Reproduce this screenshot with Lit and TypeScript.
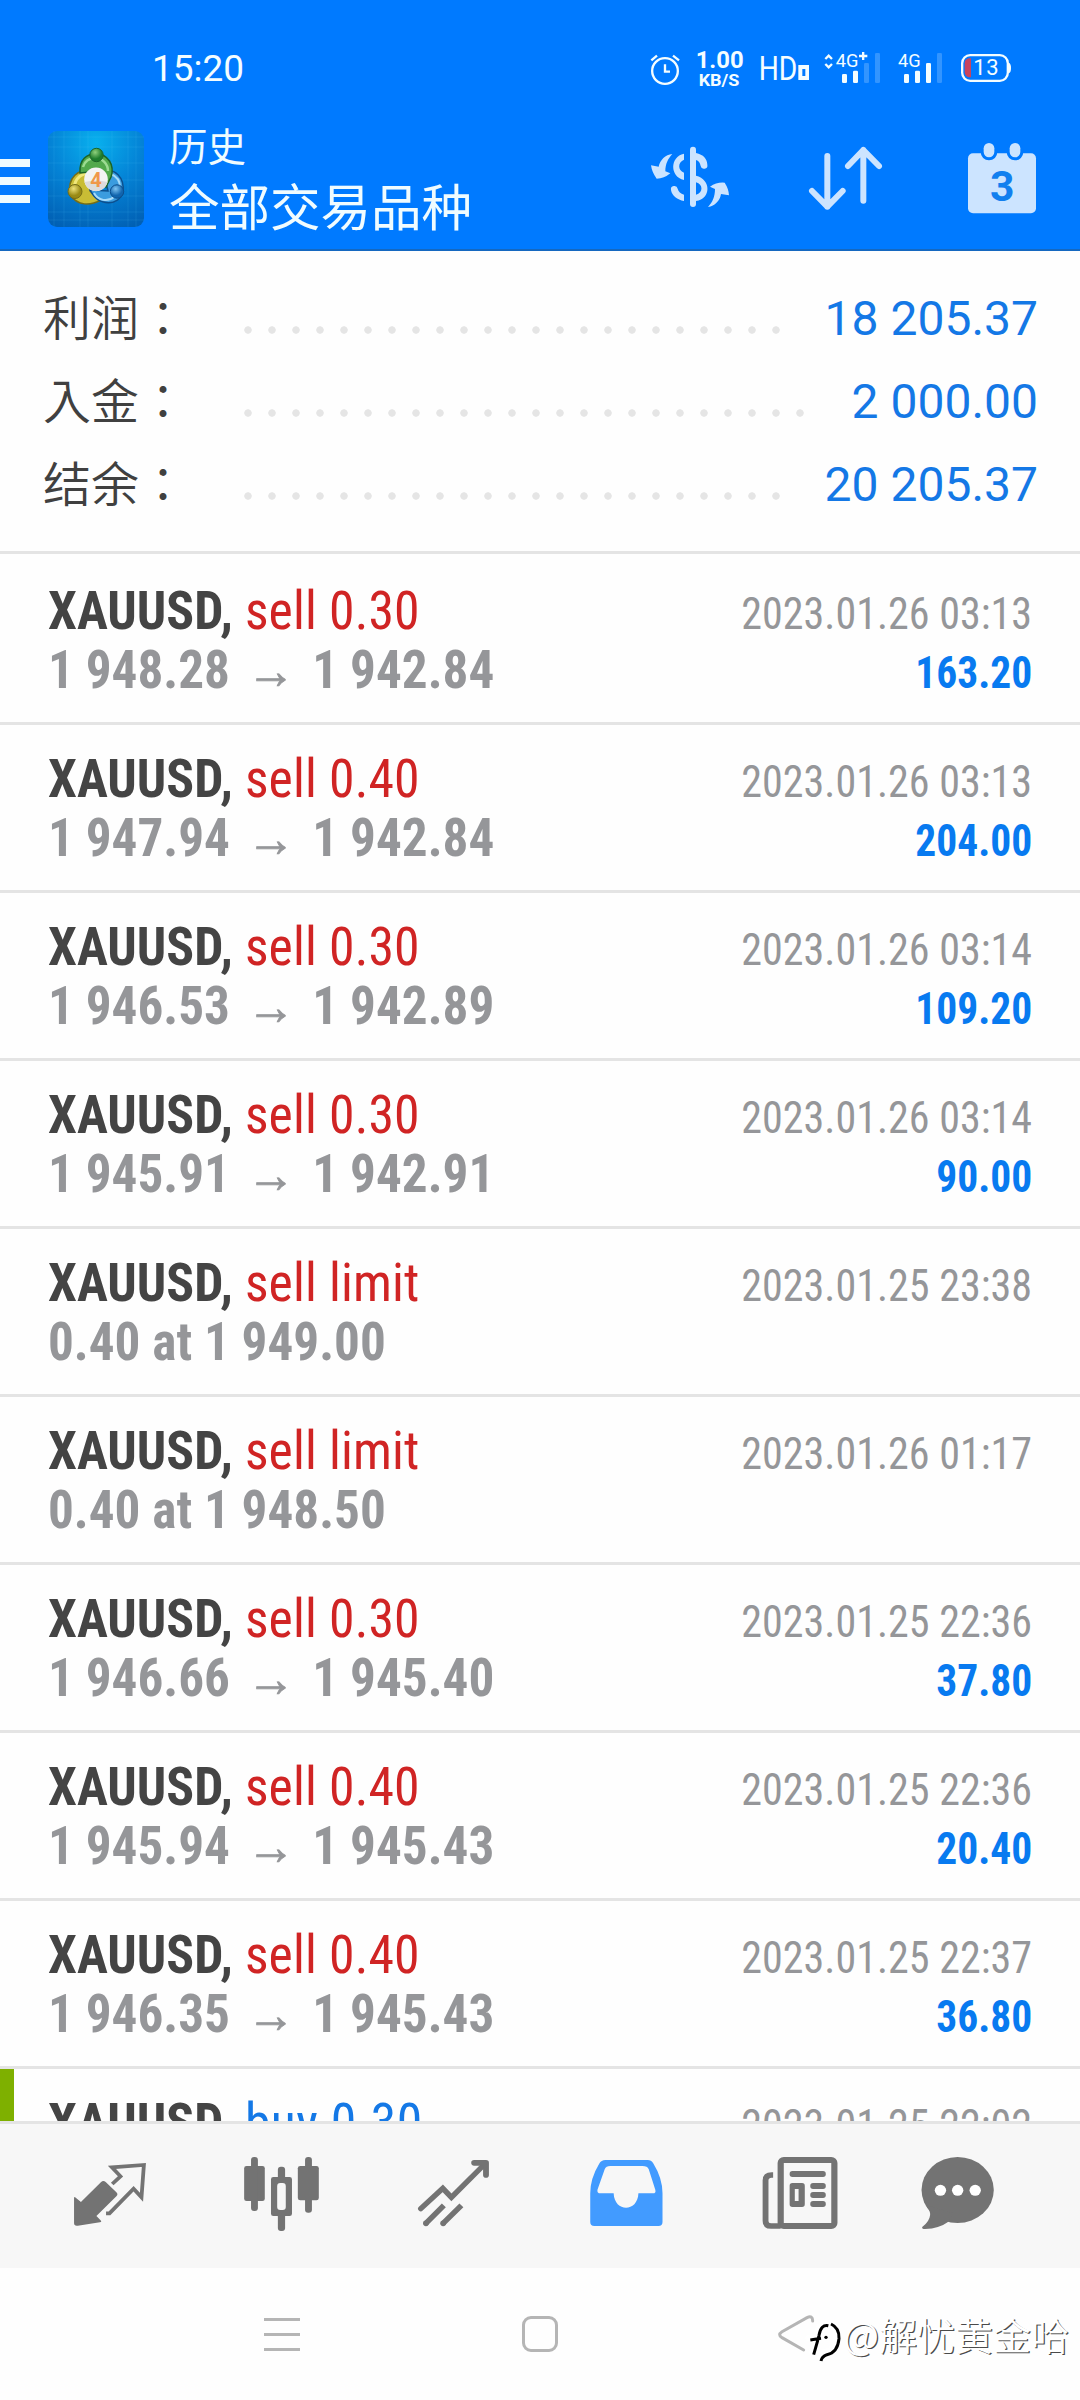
import { LitElement, html, svg, css } from "lit";
import { customElement, property } from "lit/decorators.js";

interface Deal {
  kind: string;
  side: "sell" | "buy";
  from?: string;
  to?: string;
  order?: string;
  time: string;
  profit?: string;
}

const DEALS: Deal[] = [
  { kind: "sell 0.30", side: "sell", from: "1 948.28", to: "1 942.84", time: "2023.01.26 03:13", profit: "163.20" },
  { kind: "sell 0.40", side: "sell", from: "1 947.94", to: "1 942.84", time: "2023.01.26 03:13", profit: "204.00" },
  { kind: "sell 0.30", side: "sell", from: "1 946.53", to: "1 942.89", time: "2023.01.26 03:14", profit: "109.20" },
  { kind: "sell 0.30", side: "sell", from: "1 945.91", to: "1 942.91", time: "2023.01.26 03:14", profit: "90.00" },
  { kind: "sell limit", side: "sell", order: "0.40 at 1 949.00", time: "2023.01.25 23:38" },
  { kind: "sell limit", side: "sell", order: "0.40 at 1 948.50", time: "2023.01.26 01:17" },
  { kind: "sell 0.30", side: "sell", from: "1 946.66", to: "1 945.40", time: "2023.01.25 22:36", profit: "37.80" },
  { kind: "sell 0.40", side: "sell", from: "1 945.94", to: "1 945.43", time: "2023.01.25 22:36", profit: "20.40" },
  { kind: "sell 0.40", side: "sell", from: "1 946.35", to: "1 945.43", time: "2023.01.25 22:37", profit: "36.80" },
  { kind: "buy 0.30", side: "buy", time: "2023.01.25 22:02" },
];

const SUMMARY = [
  ["利润：", "18 205.37"],
  ["入金：", "2 000.00"],
  ["结余：", "20 205.37"],
];

@customElement("status-bar")
class StatusBar extends LitElement {
  static styles = css`
    :host { display: flex; justify-content: space-between; align-items: flex-start; height: 104px; padding: 49px 66px 0 152px; box-sizing: border-box; }
    svg { display: block; overflow: visible; }
    text { fill: #f4fdff; font-family: Roboto, sans-serif; }
    .white { fill: #f4fdff; }
    .dim { fill: #3395ff; }
    .line { fill: none; stroke: #f4fdff; stroke-width: 7; }
    .b { font-weight: 700; }
    .low { fill: #c8445e; }
  `;
  render() {
    return html`
      <svg width="96" height="40" viewBox="0 0 96 40">
        <text x="0" y="32" font-size="37" textLength="92" lengthAdjust="spacingAndGlyphs">15:20</text>
      </svg>
      <svg width="364" height="39" viewBox="90 57 1092 117">
        <circle class="line" cx="135" cy="123" r="38.5"></circle>
        <path class="line" d="M135 103V125H150M94 91L111 77M159 77L177 91"></path>
        <text class="b" x="227" y="114" font-size="69" textLength="144" lengthAdjust="spacingAndGlyphs">1.00</text>
        <text class="b" x="236" y="167" font-size="49" textLength="122" lengthAdjust="spacingAndGlyphs">KB/S</text>
        <text x="416" y="150" font-size="99" textLength="116" lengthAdjust="spacingAndGlyphs">HD</text>
        <path class="white" fill-rule="evenodd" d="M535 105H567V150H535ZM547 117V138H556V117Z"></path>
        <path class="line" d="M616 87L626 77L636 87M616 102L626 112L636 102"></path>
        <text x="647" y="111" font-size="56" textLength="68" lengthAdjust="spacingAndGlyphs">4G</text>
        <path class="line" d="M717 78H742M729.500 66V90"></path>
        <rect class="white" x="666" y="132" width="15" height="27" rx="4"></rect>
        <rect class="white" x="699" y="122" width="15" height="37" rx="4"></rect>
        <rect class="dim" x="732" y="99" width="15" height="60" rx="4"></rect>
        <rect class="dim" x="765" y="69" width="15" height="90" rx="4"></rect>
        <text x="834" y="111" font-size="56" textLength="68" lengthAdjust="spacingAndGlyphs">4G</text>
        <rect class="white" x="852" y="132" width="15" height="27" rx="4"></rect>
        <rect class="white" x="885" y="122" width="15" height="37" rx="4"></rect>
        <rect class="white" x="918" y="99" width="15" height="60" rx="4"></rect>
        <rect class="dim" x="951" y="69" width="15" height="90" rx="4"></rect>
        <rect class="line" x="1026.500" y="75.500" width="137" height="77" rx="24"></rect>
        <path class="white" d="M1166 98Q1173 100 1173 114T1166 130Z"></path>
        <path class="low" d="M1053 85V142H1046Q1034 138 1034 126V101Q1034 88 1046 85Z"></path>
        <text x="1060" y="136" font-size="66" textLength="76">13</text>
      </svg>
    `;
  }
}

@customElement("app-header")
class AppHeader extends LitElement {
  static styles = css`
    :host { display: flex; height: 147px; box-sizing: border-box; border-bottom: 2px solid #1568c0; color: #f0fcff; }
    .menu { width: 30px; padding-top: 55px; display: flex; flex-direction: column; gap: 10px; }
    .menu i { height: 8px; background: #eefbff; }
    .logo { margin: 27px 25px 0 18px; flex: none; }
    .titles { width: 481px; font-family: "Noto Sans CJK SC", sans-serif; font-weight: 400; }
    .small { font-size: 38.5px; line-height: 50px; margin-top: 15px; }
    .large { font-size: 50.5px; line-height: 60px; margin-top: 5px; }
    .cur { margin-top: 42px; }
    .sort { margin: 42px 0 0 78px; }
    .cal { margin: 38px 0 0 84px; }
    .pale { fill: #cce4ff; }
    .stroke { fill: none; stroke: #cce4ff; stroke-width: 18; stroke-linecap: round; stroke-linejoin: round; }
    .ring { fill: #cce4ff; stroke: #007aff; stroke-width: 18; paint-order: stroke; }
    .day { font: 700 128px Roboto, sans-serif; fill: #117fef; }
    .four { font: 700 20px Roboto, sans-serif; fill: #f0984a; }
    .grid { stroke: #5fd0ff; stroke-opacity: 0.22; stroke-width: 0.6; }
    svg { display: block; flex: none; overflow: visible; }
  `;
  render() {
    return html`
      <div class="menu"><i></i><i></i><i></i></div>
      <svg class="logo" width="96" height="96" viewBox="0 0 96 96">
        <defs>
          <radialGradient id="bg" cx=".5" cy=".12" r=".95">
            <stop offset="0" stop-color="#08b0ee"></stop><stop offset=".5" stop-color="#0483d6"></stop><stop offset="1" stop-color="#0160b4"></stop>
          </radialGradient>
          <radialGradient id="g" cx=".4" cy=".3"><stop offset="0" stop-color="#8fd07c"></stop><stop offset="1" stop-color="#1f7d2c"></stop></radialGradient>
          <radialGradient id="y" cx=".4" cy=".3"><stop offset="0" stop-color="#eee27a"></stop><stop offset="1" stop-color="#998a14"></stop></radialGradient>
          <radialGradient id="b" cx=".4" cy=".3"><stop offset="0" stop-color="#7fc4f2"></stop><stop offset="1" stop-color="#1265ae"></stop></radialGradient>
        </defs>
        <rect width="96" height="96" rx="9" fill="url(#bg)"></rect>
        <path class="grid" d="M6 0V96M16 0V96M32 0V96M40 0V96M64 0V96M80 0V96M88 0V96M0 6H96M0 16H96M0 32H96M0 49H96M0 65H96M0 81H96M0 89H96"></path>
        <path d="M22 64C19 46 30 38 46 38L42 60L53 69C42 75 30 75 22 64Z" fill="#c9bd35" stroke="#756d18" stroke-width="1.500"></path>
        <path d="M26 57C27 47 34 41 45 42" fill="none" stroke="#f0e77b" stroke-width="3"></path>
        <path d="M56 42C66 36 77 46 75 62C71 74 51 77 42 59L60 60Z" fill="#3b9cdf" stroke="#0c4f8e" stroke-width="1.500"></path>
        <path d="M46 62C50 70 60 71 66 66M63 43C70 46 72 50 72 56" fill="none" stroke="#a7dbfa" stroke-width="2"></path>
        <path d="M32 42C31 28 39 23 48 23C60 23 67 34 63 46L58 56L52 40Z" fill="#52a94c" stroke="#1c6427" stroke-width="1.500"></path>
        <path d="M35 36C37 29 42 27 48 27C54 27 60 33 60 40" fill="none" stroke="#9cdb91" stroke-width="2.500"></path>
        <circle cx="48.500" cy="24" r="6.700" fill="url(#g)" stroke="#1c6427"></circle>
        <circle cx="27" cy="60.500" r="7" fill="url(#y)" stroke="#756d18"></circle>
        <circle cx="69" cy="60.500" r="6.700" fill="url(#b)" stroke="#0c4f8e"></circle>
        <circle cx="48" cy="48.300" r="11.800" fill="#f3f3f3"></circle>
        <path d="M36.500 51Q48 48 59.500 51A11.800 11.800 0 0 1 36.500 51Z" fill="#dcdcdc"></path>
        <text class="four" x="48" y="55.500" text-anchor="middle">4</text>
      </svg>
      <div class="titles">
        <div class="small">历史</div>
        <div class="large">全部交易品种</div>
      </div>
      <svg class="cur" width="80" height="62" viewBox="90 348 240 186">
        <path class="pale" d="M192 371C149 380 149 440 192 450V428C173 420 173 397 192 389ZM153 480a10 10 0 0 1 20-4C175 484 182 491 192 494V513C172 509 156 498 153 480ZM228 369C250 373 262 388 262 404a10 10 0 0 1-20 4C240 398 236 392 228 390ZM228 437C274 448 274 506 228 513V494C250 490 250 462 228 457ZM157 372C136 374 120 390 116 410L93 406Q96 428 110 446Q132 446 151 430L136 424C136 402 144 386 157 372ZM264 531C285 528 300 512 303 492L327 496Q326 476 314 458Q290 456 270 470L285 477C285 500 278 516 264 531Z"></path>
        <rect class="pale" x="210" y="350" width="18" height="181" rx="9"></rect>
      </svg>
      <svg class="sort" width="75" height="65" viewBox="566 348 225 195">
        <path class="stroke" d="M624 378V530M578 483L624 530L670 483M732 512V360M686 408L732 360L779 408"></path>
      </svg>
      <svg class="cal" width="70" height="72" viewBox="1041 335 210 216">
        <rect class="pale" x="1044" y="369" width="204" height="180" rx="15"></rect>
        <rect class="ring" x="1091" y="338" width="32" height="43" rx="16"></rect>
        <rect class="ring" x="1169" y="338" width="32" height="43" rx="16"></rect>
        <text class="day" x="1147" y="511" text-anchor="middle">3</text>
      </svg>
    `;
  }
}

@customElement("account-summary")
class AccountSummary extends LitElement {
  static styles = css`
    :host { display: block; height: 303px; box-sizing: border-box; padding: 26px 42px 0 43px; border-bottom: 3px solid #e4e4e4; }
    .row { display: flex; align-items: center; height: 83px; }
    .label { width: 193px; flex: none; margin-top: -6px; font: 350 48px/83px "Noto Sans CJK TC", "Noto Sans CJK SC", sans-serif; color: #404040; }
    .dots { flex: 1; height: 8px; margin: 23px 34px 0 0; background: radial-gradient(circle at 12px 4px, #e5e5e5 3.4px, transparent 4px) 0 0 / 24px 8px repeat-x; }
    .value { font: 400 48px/83px Roboto, sans-serif; color: #1478e6; }
  `;
  render() {
    return SUMMARY.map(
      ([label, value]) => html`<div class="row">
        <span class="label" lang="zh-Hant">${label}</span><span class="dots"></span><span class="value">${value}</span>
      </div>`
    );
  }
}

@customElement("deal-row")
class DealRow extends LitElement {
  @property({ attribute: false }) deal!: Deal;
  static styles = css`
    :host { display: flex; justify-content: space-between; height: 168px; box-sizing: border-box; padding: 24px 48px 0 48px; border-bottom: 3px solid #e4e4e4; font-family: "Roboto Condensed", Roboto, sans-serif; font-stretch: 75%; white-space: nowrap; }
    .line { height: 59px; line-height: 59px; font-size: 54px; transform: scaleX(0.957); transform-origin: left; }
    .symbol { font-weight: 700; color: #444; }
    .kind { font-weight: 440; letter-spacing: 0.15px; }
    .sell { color: #d02424; }
    .buy { color: #1478e6; letter-spacing: 0.5px; }
    .price { font-weight: 700; color: #959699; transform: scaleX(0.948); }
    .arrow { display: inline-block; width: 87px; text-align: center; font: 400 51px/40px "Liberation Sans", sans-serif; -webkit-text-stroke: 0.8px #959699; }
    .right { text-align: right; font-size: 45px; padding-top: 1px; }
    .time { height: 59px; line-height: 64px; color: #959699; transform: scaleX(0.935); transform-origin: right; }
    .profit { height: 59px; line-height: 64px; font-weight: 700; color: #087af0; transform: scaleX(0.922); transform-origin: right; }
  `;
  render() {
    const d = this.deal;
    return html`
      <div>
        <div class="line"><span class="symbol">XAUUSD,</span> <span class="kind ${d.side}">${d.kind}</span></div>
        <div class="line price">${d.order ?? (d.from ? html`${d.from}<span class="arrow">→</span>${d.to}` : "")}</div>
      </div>
      <div class="right">
        <div class="time">${d.time}</div>
        <div class="profit">${d.profit ?? ""}</div>
      </div>
    `;
  }
}

const TABS = [
  { x: 180, active: false, art: svg`
    <path class="f" d="M215 445Q215 438 220 443L235 456L293 397Q300 389 307 396L338 427Q344 433 338 439L280 498L292 511Q297 516 290 517L226 527Q215 529 215 519Z"></path>
    <path class="s" stroke-width="11" d="M326 402L350 379L325 352L418 345L411 442L388 416L318 490L308 490"></path>` },
  { x: 679.5, active: false, art: svg`
    <rect class="f" x="709" y="348" width="60" height="105" rx="7"></rect><rect class="f" x="729" y="321" width="20" height="162" rx="9"></rect>
    <rect class="f" x="865" y="348" width="61" height="103" rx="7"></rect><rect class="f" x="886" y="321" width="20" height="167" rx="9"></rect>
    <rect class="f" x="807" y="350" width="21" height="40" rx="9"></rect><rect class="f" x="807" y="490" width="21" height="53" rx="9"></rect>
    <path class="f" fill-rule="evenodd" d="M794 381H841Q848 381 848 388V491Q848 498 841 498H794Q787 498 787 491V388Q787 381 794 381ZM814 399Q805 399 805 409V471Q805 480 814 480H821Q830 480 830 471V409Q830 399 821 399Z"></path>` },
  { x: 1179, active: false, art: svg`
    <path class="s" stroke-width="16" stroke-linecap="round" d="M1222 476L1286 415L1311 442L1405 345"></path>
    <path class="s" stroke-width="17" stroke-linecap="round" stroke-linejoin="round" d="M1377 338.500H1411.500V375"></path>
    <path class="s" stroke-width="16" d="M1236 521L1289 466M1286 521L1340 466"></path>
    <circle class="f" cx="1237" cy="520" r="8.500"></circle><circle class="f" cx="1287" cy="520" r="8.500"></circle>` },
  { x: 110.4, active: true, art: svg`
    <path class="f" fill-rule="evenodd" d="M190 330H313Q323 330 329 340Q356 385 356 430V516Q356 528 344 528H158Q146 528 146 516V430Q146 385 172 341Q178 330 190 330ZM204 348Q192 348 188 358L167 419Q165 430 176 430H214C216 488 284 488 286 430H328Q338 430 335 419L316 358Q312 348 298 348Z"></path>` },
  { x: 609.8, active: false, art: svg`
    <rect class="s" stroke-width="18" x="699" y="330" width="156" height="198" rx="9"></rect>
    <path class="s" stroke-width="17" d="M677 375H673Q655 375 655 391V512Q655 528 671 528H699"></path>
    <rect class="f" x="725" y="363" width="105" height="18" rx="8"></rect>
    <path class="f" fill-rule="evenodd" d="M733 399H761Q769 399 769 407V463Q769 471 761 471H733Q725 471 725 463V407Q725 399 733 399ZM740 417V453H751V417Z"></path>
    <rect class="f" x="785" y="399" width="45" height="18" rx="8"></rect><rect class="f" x="785" y="426" width="45" height="18" rx="8"></rect><rect class="f" x="785" y="453" width="45" height="18" rx="8"></rect>` },
  { x: 1074.5, active: false, art: svg`
    <ellipse class="f" cx="1213" cy="420" rx="105" ry="99"></ellipse>
    <path class="f" d="M1120 465Q1135 485 1133 495Q1131 515 1110 531Q1108 537 1118 537Q1160 535 1186 515L1200 490Z"></path>
    <circle class="w" cx="1163" cy="421" r="16.500"></circle><circle class="w" cx="1213" cy="421" r="16.500"></circle><circle class="w" cx="1264" cy="421" r="16.500"></circle>` },
];

@customElement("tab-bar")
class TabBar extends LitElement {
  static styles = css`
    :host { display: grid; grid-template-columns: repeat(5, 172px) 148px; align-items: center; justify-items: center; justify-content: start; padding-left: 24px; height: 147px; box-sizing: border-box; border-top: 3px solid #e4e4e4; background: #f7f7f7; color: #737373; }
    .on { color: #429bff; }
    .f { fill: currentColor; }
    .s { fill: none; stroke: currentColor; }
    .w { fill: #fff; }
  `;
  render() {
    return TABS.map(
      (t) => html`<svg class=${t.active ? "on" : ""} width="96" height="96" viewBox="${t.x} 294 279 288" preserveAspectRatio="none">${t.art}</svg>`
    );
  }
}

@customElement("nav-bar")
class NavBar extends LitElement {
  static styles = css`
    :host { display: grid; grid-template-columns: repeat(3, 258px); justify-content: center; justify-items: center; align-items: center; height: 132px; background: #fefefe; position: relative; }
    .recent { display: grid; gap: 12px; width: 36px; }
    .recent i { height: 3px; background: #b5b5b5; }
    .home { width: 36px; height: 36px; box-sizing: border-box; border: 3px solid #b5b5b5; border-radius: 9px; }
    .back { fill: none; stroke: #b5b5b5; stroke-width: 9; stroke-linecap: round; }
    .mark { position: absolute; right: 11px; top: 36px; display: flex; align-items: center; height: 60px; }
    .mark span { font: 350 38px/60px "Noto Sans CJK SC", sans-serif; color: #fff; text-shadow: 1.3px 1.3px 0.5px #4a4a4a; }
    .mark svg { overflow: visible; margin-right: -1px; }
    .halo { fill: none; stroke: #fff; stroke-width: 18; stroke-linecap: round; }
    .ink { fill: none; stroke: #000; stroke-width: 9; }
  `;
  render() {
    return html`
      <div class="recent"><i></i><i></i><i></i></div>
      <div class="home"></div>
      <svg width="42" height="42" viewBox="20 36 126 126"><path class="back" d="M127 60Q127 42 110 50L35 92Q21 101 35 110L100 147"></path></svg>
      <div class="mark">
        <svg width="36" height="60" viewBox="111 18 108 180">
          <path class="halo" d="M162 78Q143 76 136 112L122 162M112 120L150 114M178 78Q200 88 196 120Q190 160 160 162L146 178"></path>
          <path class="ink" d="M172 83Q150 78 144 112L140 128L128 170M118 126L150 121M180 78Q206 90 204 122Q200 164 168 170Q152 176 150 189"></path>
          <circle cx="165" cy="118" r="5"></circle>
        </svg>
        <span>@解忧黄金哈</span>
      </div>
    `;
  }
}

@customElement("app-root")
class AppRoot extends LitElement {
  static styles = css`
    :host { display: flex; flex-direction: column; width: 1080px; height: 2400px; overflow: hidden; background: #fefefe; font-family: Roboto, sans-serif; }
    .top { background: #007aff; height: 251px; }
    .list { flex: 1; min-height: 0; overflow: hidden; padding-top: 3px; }
    .stripe { box-shadow: inset 14px 0 0 #7eb000; }
  `;
  render() {
    return html`
      <div class="top"><status-bar></status-bar><app-header></app-header></div>
      <account-summary></account-summary>
      <div class="list">${DEALS.map((d) => html`<deal-row class=${d.side === "buy" ? "stripe" : ""} .deal=${d}></deal-row>`)}</div>
      <tab-bar></tab-bar>
      <nav-bar></nav-bar>
    `;
  }
}
